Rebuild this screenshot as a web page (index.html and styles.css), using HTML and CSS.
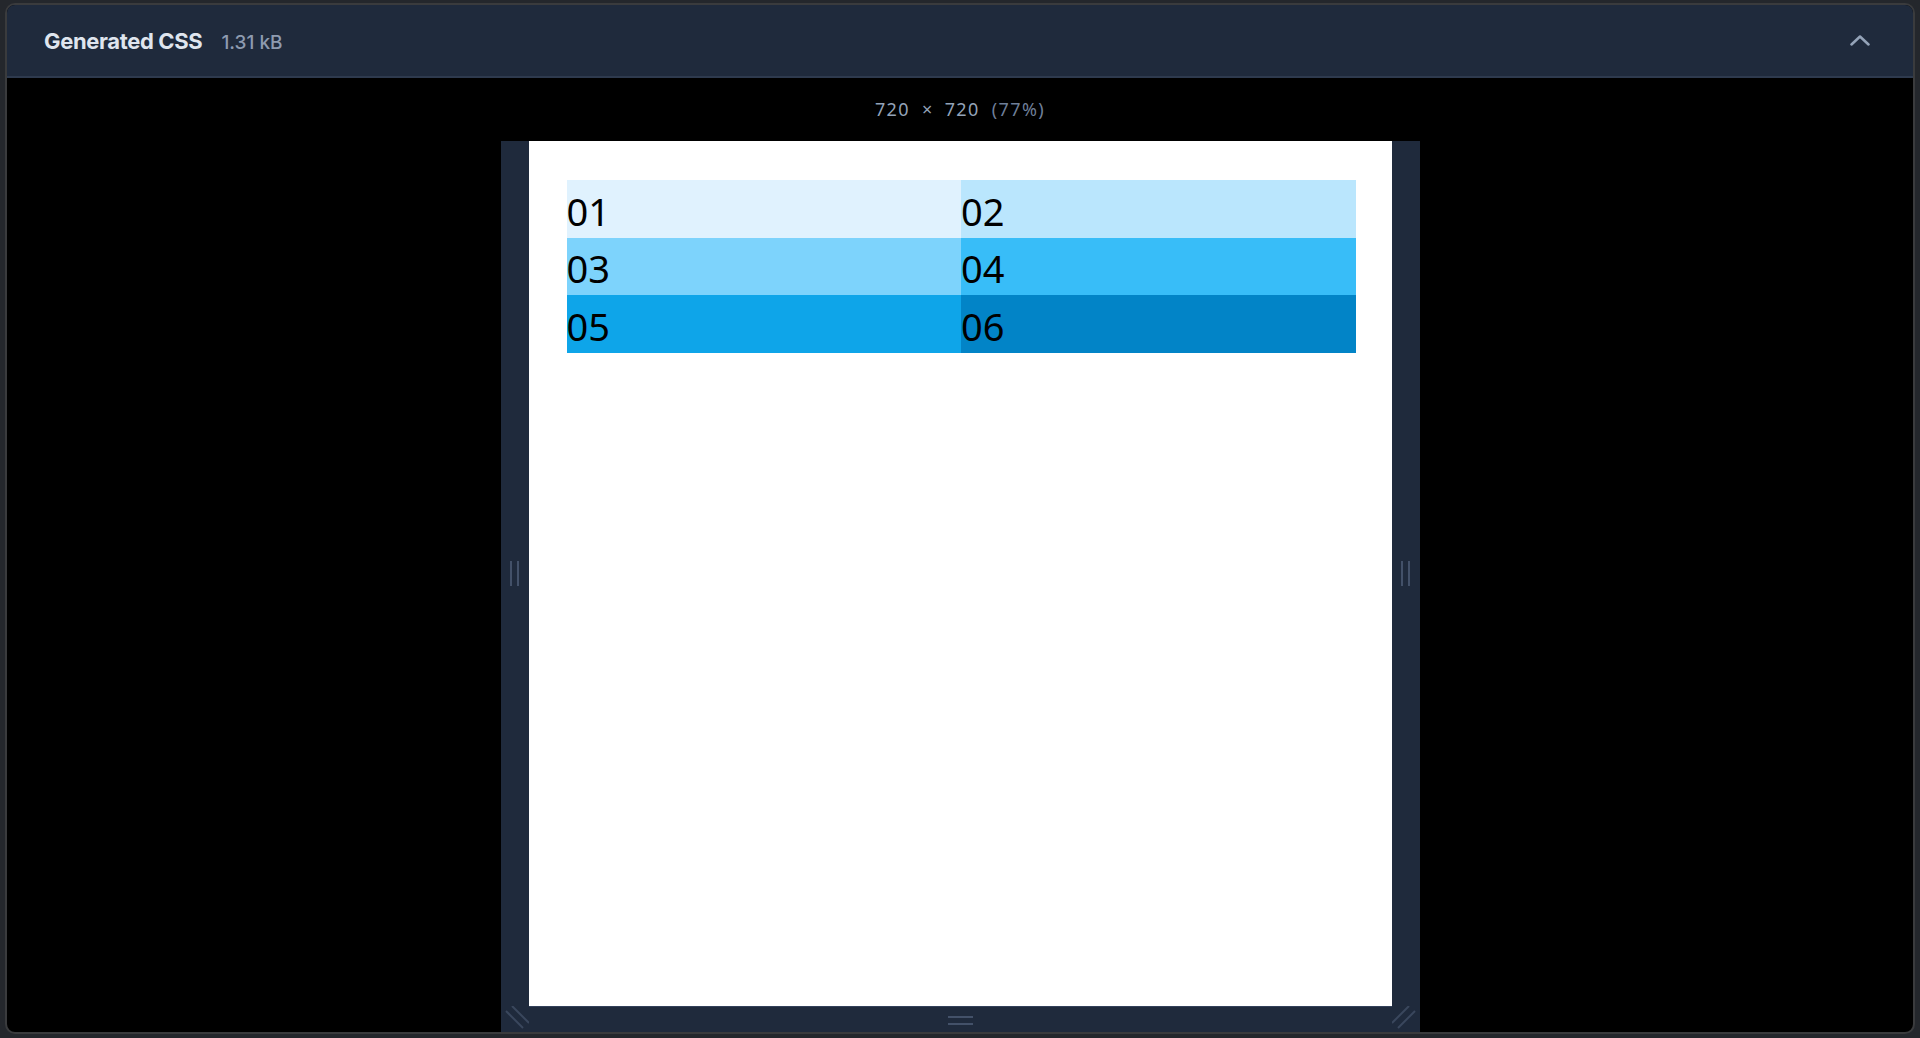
FILE: index.html
```html
<!DOCTYPE html>
<html lang="en">
<head>
<meta charset="utf-8">
<title>Generated CSS</title>
<link rel="stylesheet" href="styles.css">
</head>
<body>
<div class="window">
  <header class="bar">
    <div class="title">
      <span class="name">Generated CSS</span>
      <span class="size">1.31 kB</span>
    </div>
    <svg class="chev" width="20" height="12" viewBox="0 0 20 12"><polyline points="1.5,10.5 10,2.5 18.5,10.5" fill="none" stroke="#94a3b8" stroke-width="2.5" stroke-linecap="round" stroke-linejoin="round"/></svg>
  </header>
  <main class="stage">
    <div class="dims"><span>720</span><span class="times">×</span><span>720</span><span class="pct">(77%)</span></div>
    <div class="frame">
      <div class="frame-row">
        <div class="gutter"><span class="vgrip"></span><span class="vgrip"></span></div>
        <div class="canvas">
          <table class="grid">
            <tr><td class="c1">01</td><td class="c2">02</td></tr>
            <tr><td class="c3">03</td><td class="c4">04</td></tr>
            <tr><td class="c5">05</td><td class="c6">06</td></tr>
          </table>
        </div>
        <div class="gutter"><span class="vgrip"></span><span class="vgrip"></span></div>
      </div>
      <div class="frame-foot">
        <svg class="corner" width="28" height="26" viewBox="0 0 28 26"><line x1="5" y1="5" x2="22" y2="22" stroke="#3a475d" stroke-width="2"/><line x1="11" y1="0" x2="28" y2="17" stroke="#3a475d" stroke-width="2"/></svg>
        <div class="hgrips"><span class="hgrip"></span><span class="hgrip"></span></div>
        <svg class="corner" width="28" height="26" viewBox="0 0 28 26"><line x1="23" y1="5" x2="6" y2="22" stroke="#3a475d" stroke-width="2"/><line x1="17" y1="0" x2="0" y2="17" stroke="#3a475d" stroke-width="2"/></svg>
      </div>
    </div>
  </main>
</div>
</body>
</html>
```

FILE: styles.css
```css
html, body {
  margin: 0;
  padding: 0;
  height: 100%;
  background: #24272c;
  overflow: hidden;
}

.window {
  box-sizing: border-box;
  margin: 3px 5px 0 5px;
  height: 1031px;
  border: 2px solid #3a3b3d;
  border-radius: 10px;
  overflow: hidden;
  background: #000;
  display: flex;
  flex-direction: column;
}

.bar {
  flex: 0 0 auto;
  height: 71px;
  background: #1f2a3c;
  border-bottom: 2px solid #2e3a4e;
  display: flex;
  align-items: center;
  justify-content: space-between;
  padding: 0 43px 0 37px;
}

.title {
  display: flex;
  align-items: baseline;
  gap: 19px;
  font-family: Inter, "Liberation Sans", sans-serif;
}

.name {
  font-size: 22px;
  font-weight: 700;
  color: #dfe5ee;
  letter-spacing: -0.35px;
}

.size {
  font-size: 19px;
  font-weight: 500;
  color: #8e9bb0;
  letter-spacing: 0;
}

.chev {
  display: block;
  margin-top: -1px;
}

.stage {
  flex: 1 1 auto;
  display: flex;
  flex-direction: column;
  align-items: center;
  min-height: 0;
}

.dims {
  margin-top: 19px;
  height: 44px;
  display: flex;
  align-items: flex-start;
  font-family: "Noto Sans", sans-serif;
  font-size: 18px;
  letter-spacing: 1.4px;
  color: #94a3b8;
  line-height: 24px;
}

.times {
  padding: 0 11px 0 12px;
}

.pct {
  margin-left: 12px;
  color: #6f7f99;
}

.frame {
  flex: 1 1 auto;
  width: 919px;
  background: #1f2a3c;
  display: flex;
  flex-direction: column;
}

.frame-row {
  display: flex;
}

.gutter {
  flex: 1 1 auto;
  display: flex;
  align-items: center;
  justify-content: center;
  gap: 5px;
}

.vgrip {
  width: 2px;
  height: 25px;
  background: #435169;
}

.canvas {
  flex: 0 0 auto;
  width: 863px;
  height: 865px;
  background: #fff;
  box-sizing: border-box;
  padding: 39px 36px 0 38px;
  box-shadow: 0 1px 0 0 #33415a;
}

.grid {
  width: 100%;
  border-collapse: collapse;
  table-layout: fixed;
  font-family: "Noto Sans", sans-serif;
  font-size: 38px;
  color: #000;
}

.grid td {
  padding: 4px 0 0 0;
  height: 57.6px;
  box-sizing: border-box;
  vertical-align: middle;
  line-height: 50px;
}

.c1 { background: #e0f2fe; }
.c2 { background: #bae6fd; }
.c3 { background: #7dd3fc; }
.c4 { background: #38bdf8; }
.c5 { background: #0ea5e9; }
.c6 { background: #0284c7; }

.frame-foot {
  flex: 1 1 auto;
  display: flex;
  align-items: stretch;
}

.corner {
  display: block;
  flex: 0 0 auto;
}

.hgrips {
  flex: 1 1 auto;
  display: flex;
  flex-direction: column;
  align-items: center;
  justify-content: flex-start;
  padding-top: 10px;
  gap: 5px;
}

.hgrip {
  width: 25px;
  height: 2px;
  background: #435169;
}
```
